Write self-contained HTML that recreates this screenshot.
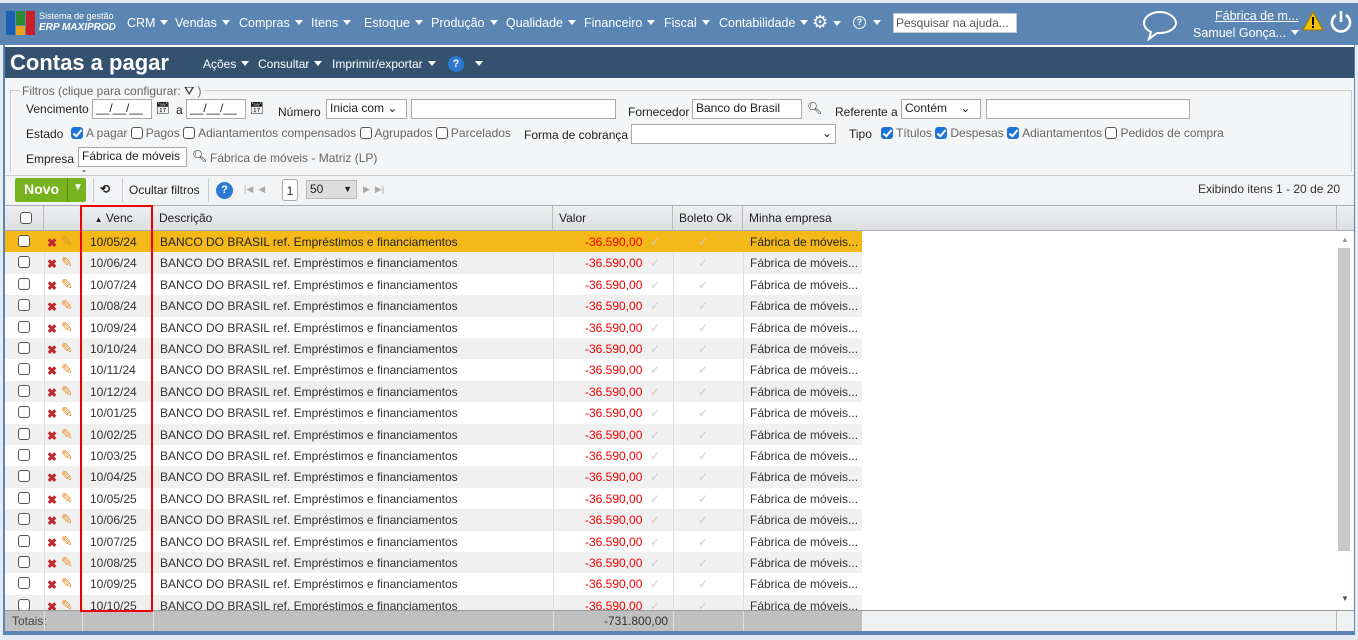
<!DOCTYPE html>
<html><head><meta charset="utf-8"><style>
*{box-sizing:border-box;margin:0;padding:0}
body{width:1358px;height:640px;overflow:hidden;background:#e4ebf2;font-family:"Liberation Sans",sans-serif;font-size:12px;color:#222;position:relative}
.a{position:absolute;white-space:nowrap}
#top{left:0;top:3px;width:1358px;height:42px;background:#5b86b3}
.nav{color:#fff;font-size:12.5px;top:16px}
.tri{display:inline-block;width:0;height:0;border-left:4px solid transparent;border-right:4px solid transparent;border-top:5px solid #fff;margin-left:5px;vertical-align:2px}
#frame{left:3px;top:45px;width:1352px;height:590px;background:#5b86b3}
#title{left:5px;top:47px;width:1349px;height:31px;background:#34516f}
#filt{left:5px;top:78px;width:1349px;height:98px;background:#f4f5f6}
.lbl{font-size:12px;color:#222}
.gl{color:#666}
.inp{position:absolute;background:#fff;border:1px solid #aaa;height:20px;font-size:12px;padding:1px 3px}
.cb{display:inline-block;width:12px;height:12px;border:1px solid #555;border-radius:3px;background:#fff;vertical-align:-2px;margin-right:3px}
.cb.on{background:#1c74d9;border-color:#1c74d9;position:relative}
.cb.on:after{content:"";position:absolute;left:3px;top:0px;width:3px;height:7px;border:solid #fff;border-width:0 2px 2px 0;transform:rotate(40deg)}
#tb{left:5px;top:175px;width:1349px;height:30px;background:#f2f3f5;border-top:1px solid #ccc}
#hdr{left:5px;top:205px;width:1349px;height:26px;background:linear-gradient(#eceef0,#dcdee1);border-top:1px solid #aab;border-bottom:1px solid #aab}
.hc{position:absolute;top:0;height:24px;border-right:1px solid #bbb;padding:5px 6px;font-size:12px}
#grid{left:5px;top:231px;width:1331px;height:379px;background:#fff;overflow:hidden}
.r{position:absolute;left:0;width:857px;height:21.4px}
.r span{position:absolute;top:4px;font-size:12px}
.vl{position:absolute;top:0;height:21.4px;border-left:1px solid #ddd}
.x{color:#c0282d;font-weight:bold;font-size:11px}
#tot{left:5px;top:610px;width:1349px;height:21px;background:#f0f1f3;border-top:1px solid #999}
</style></head><body>
<div class="a" id="top"></div>
<div class="a" style="left:6px;top:11px;width:9px;height:24px;background:#1b5fb0"></div>
<div class="a" style="left:16px;top:11px;width:9px;height:14px;background:#2f8a2f"></div>
<div class="a" style="left:16px;top:26px;width:9px;height:9px;background:#e8a21a"></div>
<div class="a" style="left:26px;top:11px;width:9px;height:24px;background:#c8202a"></div>
<div class="a" style="left:39px;top:11px;color:#fff;font-size:9px">Sistema de gestão</div>
<div class="a" style="left:39px;top:22px;color:#fff;font-size:10px;font-style:italic;font-weight:bold">ERP MAXIPROD</div>
<div class="a nav" style="left:127px">CRM<i class="tri"></i></div>
<div class="a nav" style="left:175px">Vendas<i class="tri"></i></div>
<div class="a nav" style="left:239px">Compras<i class="tri"></i></div>
<div class="a nav" style="left:311px">Itens<i class="tri"></i></div>
<div class="a nav" style="left:364px">Estoque<i class="tri"></i></div>
<div class="a nav" style="left:431px">Produção<i class="tri"></i></div>
<div class="a nav" style="left:506px">Qualidade<i class="tri"></i></div>
<div class="a nav" style="left:584px">Financeiro<i class="tri"></i></div>
<div class="a nav" style="left:664px">Fiscal<i class="tri"></i></div>
<div class="a nav" style="left:719px">Contabilidade<i class="tri"></i></div>
<div class="a nav" style="left:812px;top:12px;font-size:18px">⚙<i class="tri"></i></div>
<div class="a" style="left:853px;top:16px;width:13px;height:13px;border:1.5px solid #fff;border-radius:50%;color:#fff;font-size:9px;text-align:center;line-height:11px;font-weight:bold">?</div>
<div class="a nav" style="left:868px"><i class="tri"></i></div>
<div class="a" style="left:893px;top:13px;width:124px;height:20px;background:#fff;border:1px solid #ccc;color:#555;font-size:12px;padding:2px 2px">Pesquisar na ajuda...</div>
<svg class="a" style="left:1141px;top:9px" width="38" height="32"><path d="M19 3C10 3 3 8 3 14c0 4 3 7 7 9l-2 7 8-6h3c9 0 16-5 16-10S28 3 19 3z" fill="none" stroke="#fff" stroke-width="2"/></svg>
<div class="a" style="left:1215px;top:9px;color:#fff;text-decoration:underline;font-size:12.5px">Fábrica de m...</div>
<div class="a" style="left:1193px;top:26px;color:#fff;font-size:12.5px">Samuel Gonça...<i class="tri"></i></div>
<svg class="a" style="left:1302px;top:11px" width="22" height="20"><path d="M11 1L21 19H1z" fill="#f2c200" stroke="#a07800"/><rect x="10" y="6" width="2" height="8" fill="#000"/><rect x="10" y="15" width="2" height="2" fill="#000"/></svg>
<svg class="a" style="left:1329px;top:9px" width="24" height="26"><path d="M7 6a9 9 0 1 0 10 0" fill="none" stroke="#fff" stroke-width="2.6"/><path d="M12 2v11" stroke="#fff" stroke-width="2.6"/></svg>

<div class="a" id="frame"></div>
<div class="a" style="left:5px;top:45px;width:1349px;height:2px;background:#fff"></div>
<div class="a" id="title"></div>
<div class="a" style="left:10px;top:50px;color:#fff;font-size:22px;font-weight:bold">Contas a pagar</div>
<div class="a" style="left:203px;top:57px;color:#fff;font-size:12px">Ações<i class="tri"></i></div>
<div class="a" style="left:258px;top:57px;color:#fff;font-size:12px">Consultar<i class="tri"></i></div>
<div class="a" style="left:332px;top:57px;color:#fff;font-size:12px">Imprimir/exportar<i class="tri"></i></div>
<div class="a" style="left:448px;top:56px;width:16px;height:16px;border-radius:50%;background:#2a78d0;color:#fff;font-weight:bold;font-size:11px;text-align:center;line-height:16px">?</div>
<div class="a" style="left:470px;top:57px;color:#fff"><i class="tri"></i></div>

<div class="a" id="filt"></div>
<div class="a" style="left:10px;top:90px;width:1342px;height:82px;border:1px solid #ccc;border-bottom:none"></div>
<div class="a gl" style="left:20px;top:84px;background:#f4f5f6;padding:0 2px">Filtros (clique para configurar: <span style="color:#222">⛛</span> )</div>
<div class="a lbl" style="left:26px;top:102px">Vencimento</div>
<div class="inp" style="left:92px;top:99px;width:60px">__/__/__</div>
<div class="a" style="left:155px;top:101px">📅︎</div>
<div class="a lbl" style="left:176px;top:103px">a</div>
<div class="inp" style="left:186px;top:99px;width:60px">__/__/__</div>
<div class="a" style="left:249px;top:101px">📅︎</div>
<div class="a lbl" style="left:278px;top:105px">Número</div>
<div class="inp" style="left:326px;top:99px;width:81px">Inicia com ⌄</div>
<div class="inp" style="left:411px;top:99px;width:205px"></div>
<div class="a lbl" style="left:628px;top:105px">Fornecedor</div>
<div class="inp" style="left:692px;top:99px;width:110px">Banco do Brasil</div>
<div class="a" style="left:807px;top:101px">🔍︎</div>
<div class="a lbl" style="left:835px;top:105px">Referente a</div>
<div class="inp" style="left:901px;top:99px;width:80px">Contém &nbsp;&nbsp;&nbsp;⌄</div>
<div class="inp" style="left:986px;top:99px;width:204px"></div>
<div class="a lbl" style="left:26px;top:127px">Estado</div>
<div class="a gl" style="left:71px;top:126px"><i class="cb on"></i>A pagar <i class="cb"></i>Pagos <i class="cb"></i>Adiantamentos compensados <i class="cb"></i>Agrupados <i class="cb"></i>Parcelados</div>
<div class="a lbl" style="left:524px;top:128px">Forma de cobrança</div>
<div class="inp" style="left:631px;top:124px;width:205px;text-align:right">⌄</div>
<div class="a lbl" style="left:849px;top:127px">Tipo</div>
<div class="a gl" style="left:881px;top:126px"><i class="cb on"></i>Títulos <i class="cb on"></i>Despesas <i class="cb on"></i>Adiantamentos <i class="cb"></i>Pedidos de compra</div>
<div class="a lbl" style="left:26px;top:152px">Empresa</div>
<div class="inp" style="left:78px;top:147px;width:109px">Fábrica de móveis -</div>
<div class="a" style="left:192px;top:149px">🔍︎</div>
<div class="a gl" style="left:210px;top:151px">Fábrica de móveis - Matriz (LP)</div>

<div class="a" id="tb"></div>
<div class="a" style="left:15px;top:178px;width:71px;height:24px;background:#77b31f;border-radius:2px;color:#fff;font-weight:bold;font-size:14px;padding:3px 9px">Novo<span style="position:absolute;left:52px;top:0;height:24px;border-left:1px solid #5b8f12;padding:4px 5px;font-size:10px">▼</span></div>
<div class="a" style="left:93px;top:178px;height:24px;border-left:1px solid #ccc"></div>
<div class="a" style="left:100px;top:182px;font-weight:bold">⟲</div>
<div class="a" style="left:122px;top:178px;height:24px;border-left:1px solid #ccc"></div>
<div class="a" style="left:129px;top:183px">Ocultar filtros</div>
<div class="a" style="left:208px;top:178px;height:24px;border-left:1px solid #ccc"></div>
<div class="a" style="left:216px;top:182px;width:17px;height:17px;border-radius:50%;background:#2a78d0;color:#fff;font-weight:bold;font-size:11px;text-align:center;line-height:17px">?</div>
<div class="a" style="left:244px;top:184px;color:#aaa;font-size:9px">|◀ &nbsp;◀</div>
<div class="a" style="left:282px;top:179px;width:16px;height:22px;border:1px solid #aaa;border-radius:3px;background:#fff;text-align:center;padding-top:4px">1</div>
<div class="a" style="left:306px;top:180px;width:51px;height:19px;background:#ddd;border:1px solid #bbb;padding:1px 3px">50 <span style="position:absolute;right:4px;top:3px;font-size:9px">▼</span></div>
<div class="a" style="left:363px;top:184px;color:#aaa;font-size:9px">▶ &nbsp;▶|</div>
<div class="a" style="left:1198px;top:182px;color:#333">Exibindo itens 1 - 20 de 20</div>

<div class="a" id="hdr">
<div class="hc" style="left:0;width:39px"><i class="cb" style="margin:1px 9px"></i></div>
<div class="hc" style="left:39px;width:38px"></div>
<div class="hc" style="left:77px;width:71px">&nbsp;&nbsp;<span style="font-size:8px">▲</span> Venc</div>
<div class="hc" style="left:148px;width:400px">Descrição</div>
<div class="hc" style="left:548px;width:120px">Valor</div>
<div class="hc" style="left:668px;width:70px">Boleto Ok</div>
<div class="hc" style="left:738px;width:594px">Minha empresa</div>
</div>

<div class="a" id="grid">
<div class="r" style="top:0px;background:#f4b919"><i class="cb" style="position:absolute;left:13px;top:4px"></i><span class="x" style="left:42px;top:5px">✖</span><span style="left:56px;color:#e8902a;top:2px;font-size:14px">✎</span><span style="left:85px">10/05/24</span><span style="left:155px">BANCO DO BRASIL ref. Empréstimos e financiamentos</span><span style="left:580px;color:#e00">-36.590,00</span><span style="left:645px;color:#ccc">✓</span><span style="left:693px;color:#ccc">✓</span><span style="left:745px">Fábrica de móveis...</span></div>
<div id="rows"></div>
</div>
<div class="a" style="left:1336px;top:231px;width:18px;height:379px;background:#fff"></div>
<div class="a" style="left:1341px;top:235px;color:#999;font-size:8px">▲</div>
<div class="a" style="left:1338px;top:248px;width:12px;height:303px;background:#c8c8c8"></div>
<div class="a" style="left:1341px;top:594px;color:#555;font-size:8px">▼</div>

<div class="a" id="tot">
<div class="a" style="left:0;top:0;width:857px;height:20px;background:#c0c0c0"></div>
<div class="a" style="left:7px;top:3px;color:#444">Totais:</div>
<div class="a" style="left:39px;top:0;height:20px;border-left:1px solid #ddd"></div>
<div class="a" style="left:77px;top:0;height:20px;border-left:1px solid #ddd"></div>
<div class="a" style="left:148px;top:0;height:20px;border-left:1px solid #ddd"></div>
<div class="a" style="left:548px;top:0;height:20px;border-left:1px solid #ddd"></div>
<div class="a" style="left:668px;top:0;height:20px;border-left:1px solid #ddd"></div>
<div class="a" style="left:738px;top:0;height:20px;border-left:1px solid #ddd"></div>
<div class="a" style="left:599px;top:3px;color:#333">-731.800,00</div>
<div class="a" style="left:1331px;top:0;height:20px;border-left:1px solid #bbb"></div>
</div>

<div class="a" style="left:80px;top:205px;width:73px;height:407px;border:2px solid #e00"></div>

<script>
var d=["10/06/24","10/07/24","10/08/24","10/09/24","10/10/24","10/11/24","10/12/24","10/01/25","10/02/25","10/03/25","10/04/25","10/05/25","10/06/25","10/07/25","10/08/25","10/09/25","10/10/25"];
var h="";
for(var i=0;i<d.length;i++){
var t=(i+1)*21.4, bg=(i%2==0)?"#f0f0f1":"#fff";
h+='<div class="r" style="top:'+t+'px;background:'+bg+'"><div class="vl" style="left:39px"></div><div class="vl" style="left:548px"></div><div class="vl" style="left:668px"></div><div class="vl" style="left:738px"></div><i class="cb" style="position:absolute;left:13px;top:4px"></i><span class="x" style="left:42px;top:5px">✖</span><span style="left:56px;color:#e8902a;top:2px;font-size:14px">✎</span><span style="left:85px;color:#333">'+d[i]+'</span><span style="left:155px;color:#333">BANCO DO BRASIL ref. Empréstimos e financiamentos</span><span style="left:580px;color:#e00">-36.590,00</span><span style="left:645px;color:#ccc">✓</span><span style="left:693px;color:#ccc">✓</span><span style="left:745px;color:#333">Fábrica de móveis...</span></div>';
}
document.getElementById("rows").outerHTML=h;
</script>
</body></html>
